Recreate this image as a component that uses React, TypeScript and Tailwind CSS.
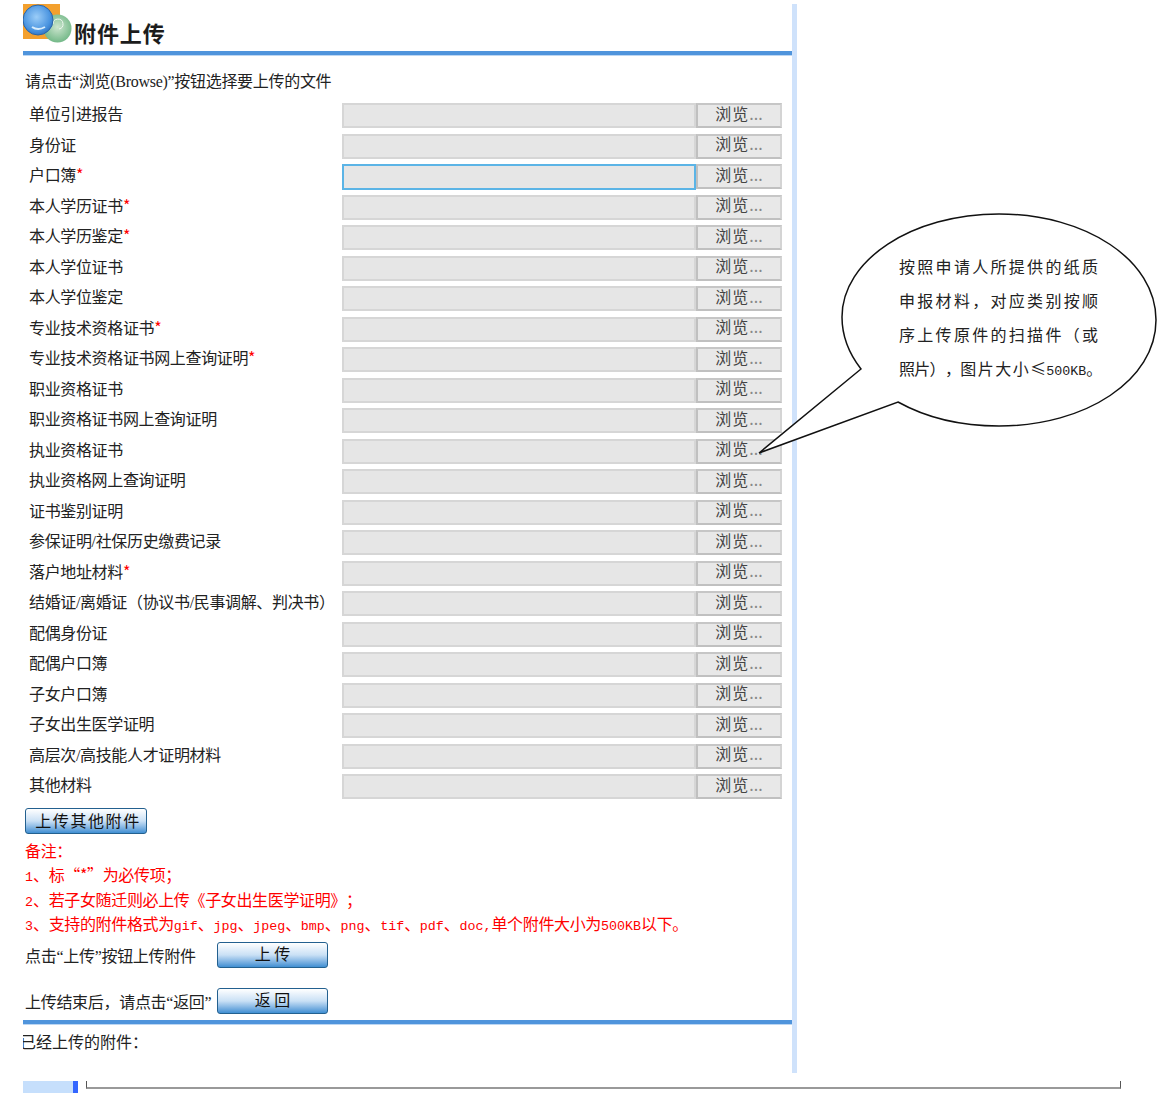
const cjk = "font-['Noto_Sans_CJK_SC','Liberation_Sans',sans-serif]"
const serif = "font-['Liberation_Serif',serif]"

const rows = [
  { name: "单位引进报告" },
  { name: "身份证" },
  { name: "户口簿", must: true, focus: true },
  { name: "本人学历证书", must: true },
  { name: "本人学历鉴定", must: true },
  { name: "本人学位证书" },
  { name: "本人学位鉴定" },
  { name: "专业技术资格证书", must: true },
  { name: "专业技术资格证书网上查询证明", must: true },
  { name: "职业资格证书" },
  { name: "职业资格证书网上查询证明" },
  { name: "执业资格证书" },
  { name: "执业资格网上查询证明" },
  { name: "证书鉴别证明" },
  { name: "参保证明/社保历史缴费记录" },
  { name: "落户地址材料", must: true },
  { name: "结婚证/离婚证（协议书/民事调解、判决书）" },
  { name: "配偶身份证" },
  { name: "配偶户口簿" },
  { name: "子女户口簿" },
  { name: "子女出生医学证明" },
  { name: "高层次/高技能人才证明材料" },
  { name: "其他材料" },
]

// latin letters in the notes are half a character wide
const Mono = ({ children }: { children: string }) => {
  return <span className="font-['Liberation_Mono',monospace] text-[13.33px] leading-none tracking-normal">{children}</span>
}

const Narrow = ({ children }: { children: string }) => {
  return <span className={`${serif} leading-none`}>{children}</span>
}

const FileRow = ({ name, must, focus }: { name: string; must?: boolean; focus?: boolean }) => {
  const parts = name.split("/")
  return (
    <div className="flex h-[30.5px] items-start">
      <div className="w-[319px] pl-[6px] text-[16px] leading-[21.6px] tracking-[-0.35px] whitespace-nowrap text-[#222]">
        {parts.map((part, i) => (
          <span key={part}>
            {i > 0 && <Narrow>/</Narrow>}
            {part}
          </span>
        ))}
        {must && <span className="text-[#ff0000]">*</span>}
      </div>
      <div
        className={
          focus
            ? "h-[26px] w-[354px] border-2 border-[#5bb4e6] bg-[#e6e6e6]"
            : "h-[25px] w-[354px] border-2 border-[#d6d6d6] bg-[#e6e6e6]"
        }
      />
      <button className="flex h-[25px] w-[86px] items-center justify-center border-2 border-t-[#c6c6c6] border-l-[#c0c0c0] border-r-[#d4d4d4] border-b-[#c0c0c0] bg-[#e8e8e8] pb-[6px] text-[16px] leading-none tracking-[1px] text-[#444]">
        浏览<span className="tracking-normal text-[#888]">...</span>
      </button>
    </div>
  )
}

const BlueButton = ({ text, className }: { text: string; className: string }) => {
  return (
    <button
      className={`h-[26px] rounded-[3px] border border-[#23608f] bg-gradient-to-b from-[#ffffff] via-[#c9e0f5] to-[#3f8fd2] pb-[3px] text-[16px] leading-none text-[#111] ${className}`}
    >
      {text}
    </button>
  )
}

const Bubble = () => {
  return (
    <div className="absolute left-[755px] top-[210px] h-[250px] w-[403px]">
      <svg width="403" height="250" viewBox="0 0 403 250" className="absolute left-0 top-0">
        <path
          d="M4 243 L106 159 C92 141 87 122 87 107 C87 50 157 4 244 4 C331 4 401 50 401 110 C401 170 331 216 244 216 C205 216 170 207 143 192 Z"
          fill="#fff"
          stroke="#111"
          strokeWidth="1.5"
        />
      </svg>
      <div className="absolute left-[144px] top-[39px] w-[204px] text-[16px] leading-[34px] text-[#222]">
        <p className="tracking-[2.3px] whitespace-nowrap">按照申请人所提供的纸质</p>
        <p className="tracking-[2.3px] whitespace-nowrap">申报材料，对应类别按顺</p>
        <p className="tracking-[2.3px] whitespace-nowrap">序上传原件的扫描件（或</p>
        <p className="whitespace-nowrap">
          <span className="tracking-[-0.7px]">照片），</span>
          <span className="tracking-[1.5px]">图片大小</span>≤<Mono>500KB</Mono>。
        </p>
      </div>
    </div>
  )
}

const App = () => {
  return (
    <div className={`relative h-[1093px] w-[1158px] overflow-hidden bg-white [text-spacing-trim:space-all] ${cjk}`}>
      <div className="ml-[23px] mt-[4px] h-[1069px] w-[774px] border-r-[5px] border-[#cfe2fb]">
        <div className="flex h-[47px] items-end">
          <svg width="50" height="40" viewBox="0 0 50 40" className="-mb-[3px] -mt-[1px] shrink-0 self-start">
            <defs>
              <radialGradient id="blueBall" cx="45%" cy="40%" r="65%">
                <stop offset="0%" stopColor="#9bcdf8" />
                <stop offset="70%" stopColor="#4a94e0" />
                <stop offset="100%" stopColor="#2c6fbd" />
              </radialGradient>
              <radialGradient id="greenBall" cx="50%" cy="45%" r="65%">
                <stop offset="0%" stopColor="#cde6cf" />
                <stop offset="100%" stopColor="#63b07b" />
              </radialGradient>
            </defs>
            <rect x="0" y="1" width="37" height="35" fill="#f3a02e" />
            <circle cx="34.5" cy="25.5" r="14" fill="url(#greenBall)" />
            <path d="M30 21 A5 5 0 1 1 36 26" fill="none" stroke="#eef7ee" strokeWidth="1" />
            <circle cx="15" cy="17" r="15" fill="url(#blueBall)" stroke="#2a64a8" strokeWidth="1" />
            <path d="M9 24 Q15 28 22 24" fill="none" stroke="#d8ecfb" strokeWidth="2" />
          </svg>
          <h1 className="ml-[1px] mb-[4px] text-[22px] font-bold leading-[30px] tracking-[0.9px] text-[#1c1c1c]">附件上传</h1>
        </div>
        <div className="h-[5px] border-b border-[#bcd6f2] bg-[#4f94dc]" />
        <p className="mb-[9px] ml-[2px] mt-[13px] h-[25px] text-[16px] leading-[23px] tracking-[-0.3px] text-[#222]">
          请点击<Narrow>“</Narrow>浏览<Narrow>(Browse)”</Narrow>按钮选择要上传的文件
        </p>
        <div className="flex flex-col">
          {rows.map((row) => (
            <FileRow key={row.name} name={row.name} must={row.must} focus={row.focus} />
          ))}
        </div>
        <div className="ml-[2px] mt-[3px]">
          <BlueButton text="上传其他附件" className="w-[122px] pl-[4px] tracking-[1.6px]" />
        </div>
        <div className="ml-[2px] mt-[4px] text-[16px] leading-[24.4px] tracking-[-0.35px] whitespace-nowrap text-[#ff0000]">
          <p>备注：</p>
          <p><Mono>1</Mono>、标“*”为必传项；</p>
          <p><Mono>2</Mono>、若子女随迁则必上传《子女出生医学证明》；</p>
          <p>
            <Mono>3</Mono>、支持的附件格式为<Mono>gif</Mono>、<Mono>jpg</Mono>、<Mono>jpeg</Mono>、<Mono>bmp</Mono>、<Mono>png</Mono>、<Mono>tif</Mono>、<Mono>pdf</Mono>、<Mono>doc,</Mono>单个附件大小为<Mono>500KB</Mono>以下。
          </p>
        </div>
        <div className="ml-[2px] mt-[6px] flex h-[26px] items-center">
          <span className="w-[192px] text-[16px] tracking-[-0.3px] text-[#222]">
            点击<Narrow>“</Narrow>上传<Narrow>”</Narrow>按钮上传附件
          </span>
          <BlueButton text="上 传" className="w-[111px]" />
        </div>
        <div className="ml-[2px] mt-[20px] flex h-[26px] items-center">
          <span className="w-[192px] text-[16px] tracking-[-0.3px] whitespace-nowrap text-[#222]">
            上传结束后，请点击<Narrow>“</Narrow>返回<Narrow>”</Narrow>
          </span>
          <BlueButton text="返 回" className="w-[111px]" />
        </div>
        <div className="mt-[6px] h-[5px] border-b border-[#bcd6f2] bg-[#4f94dc]" />
        <div className="mt-[4px] overflow-hidden">
          <p className="-ml-[3px] text-[16px] leading-[24px] text-[#222]">已经上传的附件：</p>
        </div>
      </div>
      <div className="ml-[23px] mt-[8px] flex h-[12px] items-start">
        <div className="h-[12px] w-[50px] bg-[#c6dffc]" />
        <div className="h-[12px] w-[5px] bg-[#3366ff]" />
        <div className="ml-[8px] h-[8px] w-[1035px] border-x border-b-2 border-x-[#555] border-b-[#999]" />
      </div>
      <Bubble />
    </div>
  )
}

export default App
